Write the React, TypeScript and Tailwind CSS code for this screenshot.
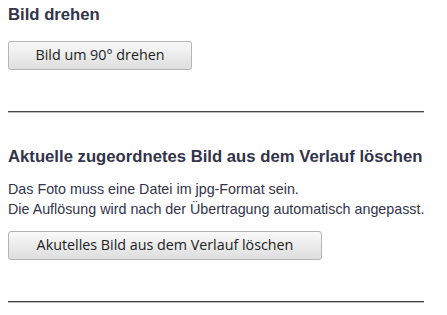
export default function App() {
  const btn =
    'h-[29px] rounded-[3px] border border-[#b4b4b4] bg-gradient-to-b from-[#f9f9f9] to-[#dedede] text-[14.3px] text-[#222] font-["Open_Sans",sans-serif] leading-none';

  return (
    <div className="bg-white min-h-screen px-2 pt-[5px] font-['Liberation_Sans',Arial,sans-serif] text-[#33334a]">
      {/* Bild drehen */}
      <h2 className="text-[16.7px] font-bold leading-[20px]">Bild drehen</h2>
      <button className={`${btn} mt-[16px] w-[184px]`}>Bild um 90° drehen</button>
      <hr className="mt-[41px] w-[416px] border-0 border-t border-b border-t-[#444] border-b-[#bbb]" />

      {/* Verlauf löschen */}
      <h2 className="mt-[34px] text-[16.7px] font-bold leading-[20px]">
        Aktuelle zugeordnetes Bild aus dem Verlauf löschen
      </h2>
      <p className="mt-[12px] text-[14.3px] leading-[20px]">
        Das Foto muss eine Datei im jpg-Format sein.
        <br />
        Die Auflösung wird nach der Übertragung automatisch angepasst.
      </p>
      <button className={`${btn} mt-[12px] w-[314px]`}>Akutelles Bild aus dem Verlauf löschen</button>
      <hr className="mt-[41px] w-[416px] border-0 border-t border-b border-t-[#444] border-b-[#bbb]" />
    </div>
  );
}
